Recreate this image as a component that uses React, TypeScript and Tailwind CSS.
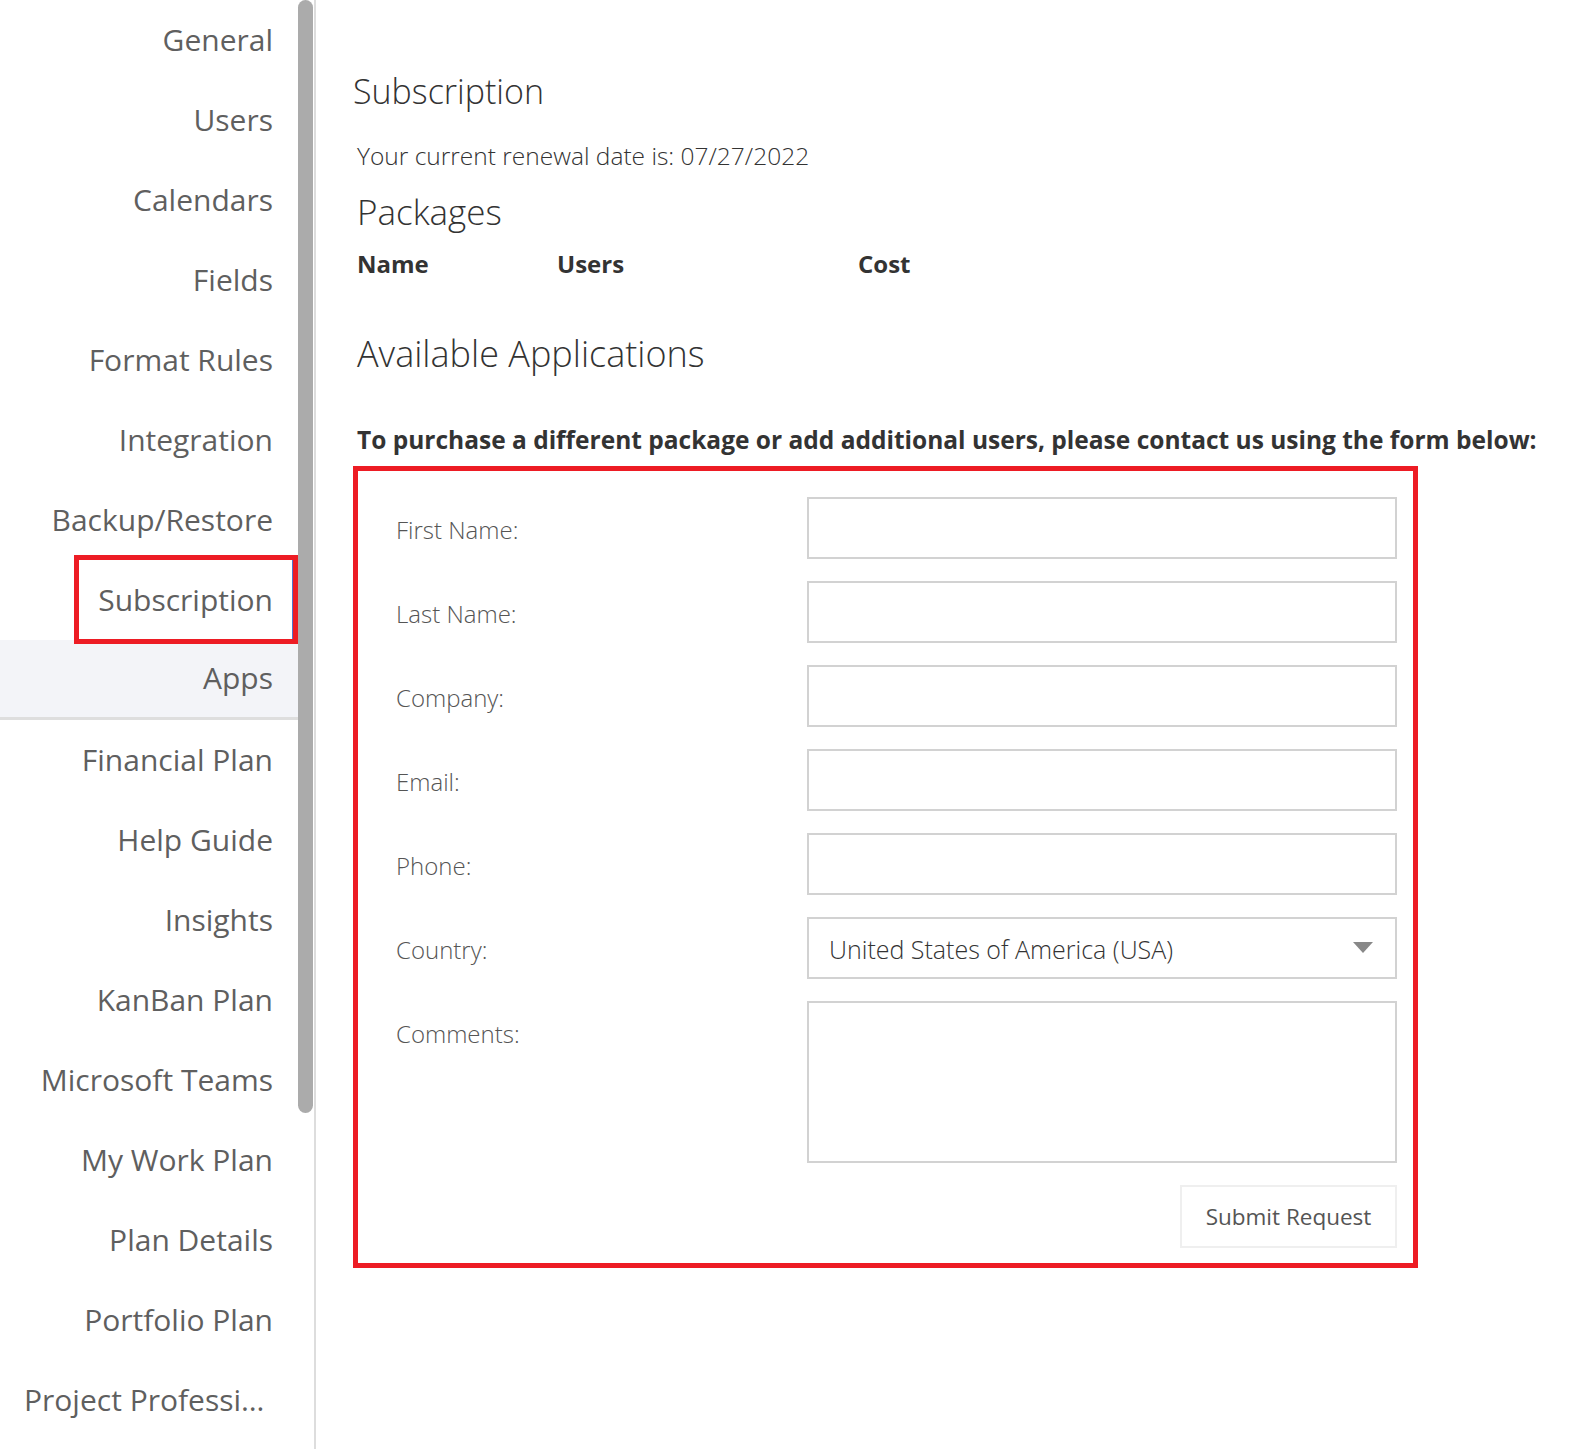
import React from "react";

const NAV = [
  "General",
  "Users",
  "Calendars",
  "Fields",
  "Format Rules",
  "Integration",
  "Backup/Restore",
  "Subscription",
  "Apps",
  "Financial Plan",
  "Help Guide",
  "Insights",
  "KanBan Plan",
  "Microsoft Teams",
  "My Work Plan",
  "Plan Details",
  "Portfolio Plan",
  "Project Professional",
];

const FIELDS = ["First Name:", "Last Name:", "Company:", "Email:", "Phone:"];

function NavItem({ label }: { label: string }) {
  const selected = label === "Subscription";
  const hovered = label === "Apps";
  return (
    <div
      className={
        "relative flex h-[80px] items-center pb-[2px] pl-[24px] pr-[25px] " +
        (hovered ? "border-b-[3px] border-[#dedede] bg-[#f3f4f8]" : "")
      }
    >
      <span className="block w-full truncate text-right text-[30px] text-[#5f5f5f]">{label}</span>
      {selected && (
        <>
          <div className="absolute right-[4px] top-0 h-full w-[2px] bg-[#4f74cf]" />
          {/* red call-out around the active item */}
          <div className="absolute left-[74px] right-0 top-[-5px] bottom-[-4px] z-10 border-[5px] border-[#ed1c24]" />
        </>
      )}
    </div>
  );
}

function FormRow({ label, children }: { label: string; children: React.ReactNode }) {
  return (
    <div className="mb-[22px] flex items-start">
      <div className="flex h-[62px] w-[411px] shrink-0 items-center pt-[4px] text-[24px] font-light text-[#555]">
        {label}
      </div>
      {children}
    </div>
  );
}

export default function App() {
  return (
    <div className="flex h-[1449px] w-[1580px] overflow-hidden bg-white font-['Open_Sans',sans-serif]">
      <nav className="w-[298px] shrink-0">
        {NAV.map((n) => (
          <NavItem key={n} label={n} />
        ))}
      </nav>
      <div className="w-[16px] shrink-0">
        <div className="h-[1113px] w-[15px] rounded-full bg-[#ababab]" />
      </div>
      <div className="w-[2px] shrink-0 bg-[#dddddd]" />

      <main className="flex-1 pl-[37px] text-[#333]">
        <h1 className="mt-[71px] text-[34px] font-light leading-[40px]">Subscription</h1>
        <p className="mt-[29px] pl-[4px] text-[24.5px] font-light leading-[32px] text-[#333]">
          Your current renewal date is: 07/27/2022
        </p>
        <h2 className="mt-[20px] pl-[4px] text-[35px] font-light leading-[40px]">Packages</h2>
        <div className="mt-[16px] flex pl-[4px] text-[24px] font-bold leading-[32px]">
          <div className="w-[200px]">Name</div>
          <div className="w-[301px]">Users</div>
          <div>Cost</div>
        </div>
        <h2 className="mt-[54px] pl-[4px] text-[36px] font-light leading-[40px]">Available Applications</h2>
        <p className="mt-[50px] whitespace-nowrap pl-[4px] text-[24.5px] font-bold leading-[32px]">
          To purchase a different package or add additional users, please contact us using the form below:
        </p>

        <div className="mt-[10px] w-[1065px] border-[5px] border-[#ed1c24] pb-[15px] pl-[38px] pr-[16px] pt-[26px]">
          {FIELDS.map((f) => (
            <FormRow key={f} label={f}>
              <input className="h-[62px] flex-1 border-2 border-[#d2d2d2] bg-white outline-none" />
            </FormRow>
          ))}
          <FormRow label="Country:">
            <div className="flex h-[62px] flex-1 items-center justify-between border-2 border-[#d2d2d2] pl-[20px] pr-[22px] pt-[4px]">
              <span className="text-[25px] font-light text-[#333]">United States of America (USA)</span>
              <svg width="20" height="11" viewBox="0 0 20 11" className="mb-[6px]">
                <path d="M0 0 H20 L10 11 Z" fill="#888" />
              </svg>
            </div>
          </FormRow>
          <FormRow label="Comments:">
            <textarea className="h-[162px] flex-1 resize-none border-2 border-[#d2d2d2] bg-white outline-none" />
          </FormRow>
          <div className="flex justify-end">
            <button className="h-[63px] w-[217px] border-2 border-[#efefef] bg-white text-[22.5px] text-[#555]">
              Submit Request
            </button>
          </div>
        </div>
      </main>
    </div>
  );
}
